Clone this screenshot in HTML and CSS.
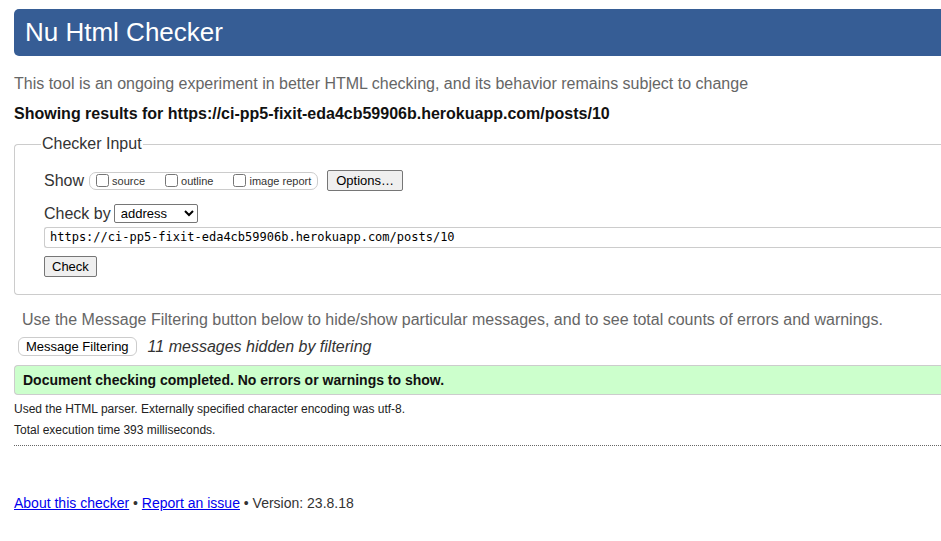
FILE: index.html
```html
<!DOCTYPE html>
<html>
<head>
<meta charset="utf-8">
<title>Nu Html Checker</title>
<link rel="stylesheet" href="styles.css">
</head>
<body>
<div class="page">
  <h1 class="title">Nu Html Checker</h1>
  <p class="intro">This tool is an ongoing experiment in better HTML checking, and its behavior remains subject to change</p>
  <p class="showing">Showing results for https://ci-pp5-fixit-eda4cb59906b.herokuapp.com/posts/10</p>
  <fieldset class="input">
    <legend>Checker Input</legend>
    <div class="row show-row">
      <span class="lbl">Show</span>
      <span class="opts">
        <label><input type="checkbox"><span>source</span></label>
        <label><input type="checkbox"><span>outline</span></label>
        <label><input type="checkbox"><span>image report</span></label>
      </span>
      <button class="btn options">Options…</button>
    </div>
    <div class="row by-row">
      <span class="lbl">Check by</span>
      <select class="sel"><option>address</option></select>
    </div>
    <div class="url">https://ci-pp5-fixit-eda4cb59906b.herokuapp.com/posts/10</div>
    <div class="row check-row"><button class="btn check">Check</button></div>
  </fieldset>
  <p class="filter-help">Use the Message Filtering button below to hide/show particular messages, and to see total counts of errors and warnings.</p>
  <div class="filter-row">
    <button class="btn filter">Message Filtering</button>
    <em class="hidden-count">11 messages hidden by filtering</em>
  </div>
  <div class="success">Document checking completed. No errors or warnings to show.</div>
  <p class="details">Used the HTML parser. Externally specified character encoding was utf-8.</p>
  <p class="details">Total execution time 393 milliseconds.</p>
  <hr class="dots">
  <p class="footer"><a href="#">About this checker</a> • <a href="#">Report an issue</a> • Version: 23.8.18</p>
</div>
</body>
</html>
```
FILE: styles.css
```css
html, body { margin: 0; padding: 0; overflow: hidden; background: #fff; }
body { font-family: "Liberation Sans", Arial, sans-serif; color: #222; }
.page { padding: 9px 0 0 14px; margin-right: -40px; }
.title {
  margin: 0; height: 47px; box-sizing: border-box;
  background: #365d95; color: #fff; font-weight: normal;
  font-size: 26px; line-height: 47px; padding-left: 11px;
  border-radius: 5px 0 0 5px;
}
.intro { margin: 18px 0 0; font-size: 16px; color: #666; line-height: 20px; }
.showing { margin: 10px 0 0; font-size: 16px; font-weight: bold; color: #111; line-height: 20px; }
.input {
  margin: 11px 0 0; padding: 14px 0 17px 29px;
  border: 1px solid #ccc; border-radius: 4px 0 0 4px; border-right: 0;
}
.input legend { font-size: 16px; color: #333; padding: 0 1px; margin-left: -3px; }
.row { display: flex; align-items: center; }
.lbl { font-size: 16px; color: #333; }
.show-row { margin-top: 3px; }
.opts {
  display: inline-flex; align-items: center; margin-left: 5px;
  border: 1px solid #ccc; border-radius: 7px; height: 18px; box-sizing: border-box;
  padding: 0 6px 0 6px;
}
.opts label { display: inline-flex; align-items: center; font-size: 11px; color: #333; margin-right: 20px; }
.opts label:last-child { margin-right: 0; }
.opts input { margin: 0 3px 0 0; width: 13px; height: 13px; }
.btn {
  font-family: "Liberation Sans", Arial, sans-serif; font-size: 13px; color: #000;
  background: #efefef; border: 1px solid #767676; border-radius: 2px;
  height: 20px; padding: 0 6px; line-height: 18px; box-sizing: border-box;
}
.options { margin-left: 9px; height: 21px; padding: 0 8px; }
.by-row { margin-top: 13px; }
.sel {
  margin-left: 3px; width: 84px; height: 19px; font-size: 13px;
  font-family: "Liberation Sans", Arial, sans-serif; border: 1px solid #767676; border-radius: 2px;
  background: #fff; color: #000; padding: 0 2px;
}
.url {
  margin-top: 4px; height: 21px; box-sizing: border-box; border: 1px solid #ccc; border-right: 0;
  border-radius: 3px 0 0 3px; font-family: "DejaVu Sans Mono", "Liberation Mono", monospace;
  font-size: 12px; line-height: 19px; padding-left: 5px; color: #000;
}
.check-row { margin-top: 8px; }
.check { height: 21px; padding: 0 7px; }
.filter-help { margin: 15px 0 0 8px; font-size: 16px; color: #666; line-height: 20px; }
.filter-row { display: flex; align-items: center; margin-top: 7px; margin-left: 4px; }
.filter { background: #fff; border: 1px solid #ccc; border-radius: 6px; height: 19px; padding: 0 7px; }
.hidden-count { margin-left: 11px; font-size: 16px; color: #333; }
.success {
  margin-top: 9px; height: 30px; box-sizing: border-box; background: #ccffcc;
  border: 1px solid #ccc; border-right: 0; border-radius: 4px 0 0 4px;
  font-weight: bold; font-size: 14px; line-height: 28px; padding-left: 8px; color: #111;
}
.details { margin: 7px 0 0; font-size: 12px; color: #222; line-height: 15px; }
.details + .details { margin-top: 6px; }
.dots { margin: 7px 0 0; border: 0; border-top: 1px dotted #666; height: 0; }
.footer { margin: 49px 0 0; font-size: 14px; color: #333; }
.footer a { color: #00e; }
```
